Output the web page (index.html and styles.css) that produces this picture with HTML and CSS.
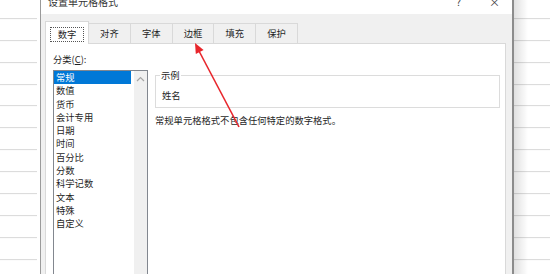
FILE: index.html
```html
<!doctype html>
<html>
<head>
<meta charset="utf-8">
<title>设置单元格格式</title>
<link rel="stylesheet" href="styles.css">
</head>
<body>

<div class="screen">
    <div class="sheet sheet-left"></div>

    <div class="dialog">
        <div class="title">
            <span class="title-text">设置单元格格式</span>
            <span class="title-btn">?</span>
            <span class="title-btn close">×</span>
        </div>

        <div class="body">
            <ul class="tabs">
                <li class="tab on"><span>数字</span></li>
                <li class="tab">对齐</li>
                <li class="tab">字体</li>
                <li class="tab">边框</li>
                <li class="tab">填充</li>
                <li class="tab">保护</li>
            </ul>

            <div class="panel">
                <div class="col-left">
                    <div class="label">分类(<u>C</u>):</div>
                    <div class="listbox">
                        <ul class="items">
                            <li class="on">常规</li>
                            <li>数值</li>
                            <li>货币</li>
                            <li>会计专用</li>
                            <li>日期</li>
                            <li>时间</li>
                            <li>百分比</li>
                            <li>分数</li>
                            <li>科学记数</li>
                            <li>文本</li>
                            <li>特殊</li>
                            <li>自定义</li>
                        </ul>
                        <div class="scroll">
                            <svg width="9" height="6" viewBox="0 0 9 6"><path d="M1 5 L4.5 1.5 L8 5" fill="none" stroke="#a6a6a6" stroke-width="1.2"/></svg>
                        </div>
                    </div>
                </div>

                <div class="col-right">
                    <fieldset class="sample">
                        <legend>示例</legend>
                        <div class="sample-val">姓名</div>
                    </fieldset>
                    <p class="desc">常规单元格格式不包含任何特定的数字格式。</p>
                </div>
            </div>
        </div>
    </div>

    <div class="sheet sheet-right"></div>

    <!-- 红色箭头 -->
    <svg class="arrow" width="550" height="274" viewBox="0 0 550 274">
        <line x1="239" y1="127" x2="199" y2="51" stroke="#e8262c" stroke-width="1.6"/>
        <polygon points="195,43 203.6,50 195.8,54" fill="#e8262c"/>
    </svg>
</div>

</body>
</html>
```

FILE: styles.css
```css
*{ margin: 0; padding: 0; box-sizing: border-box; }
li{ list-style: none; }
body{ background: #fff; font-family: "Noto Sans CJK SC", "Liberation Sans", sans-serif; font-size: 9.3px; color: #1f1f1f; overflow: hidden; }

.screen{ width: 550px; height: 274px; display: flex; position: relative; overflow: hidden; }

/* 表格背景 */
.sheet{ height: 274px; background: repeating-linear-gradient(to bottom, transparent 0, transparent 20.9px, #d8d8d8 20.9px, #d8d8d8 21.9px); background-position: 0 -2.9px; }
.sheet-left{ width: 37px; margin-right: 3px; }
.sheet-right{ flex: 1; background: linear-gradient(to right, rgba(0,0,0,.12), rgba(0,0,0,0) 14px), repeating-linear-gradient(to bottom, transparent 0, transparent 20.9px, #d8d8d8 20.9px, #d8d8d8 21.9px); background-position: 0 0, 0 -2.9px; }

/* 对话框 */
.dialog{ width: 474px; height: 274px; border-left: 1px solid #9a9a9a; border-right: 2px solid #8c8c8c; background: #f0f0f0; display: flex; flex-direction: column; overflow: hidden; }
.title{ height: 14px; flex-shrink: 0; background: #fff; display: flex; align-items: flex-start; padding: 0 12px 0 7px; font-size: 10px; }
.title-text{ margin-top: -4px; line-height: 12px; color: #333; }
.title-btn{ margin-top: -4px; line-height: 12px; color: #444; }
.title-btn:nth-of-type(2){ margin-left: auto; }
.title-btn.close{ margin-left: 28px; font-size: 11px; }

.body{ flex: 1; min-height: 0; padding: 7px 6px 0 4px; display: flex; flex-direction: column; }

/* 选项卡 */
.tabs{ display: flex; align-items: flex-end; height: 22px; flex-shrink: 0; }
.tab{ width: 41.8px; height: 20px; line-height: 19px; text-align: center; border: 1px solid #d9d9d9; border-bottom: none; border-left: none; background: #f0f0f0; }
.tab.on{ width: 44px; height: 23px; margin-bottom: -1px; border-left: 1px solid #d9d9d9; background: #fff; position: relative; z-index: 1; padding-top: 3px; }
.tab.on span{ display: inline-block; width: 34px; height: 15px; line-height: 13px; border: 1px dotted #555; }

.panel{ flex: 1 0 auto; background: #fff; border: 1px solid #d9d9d9; display: flex; padding: 9px 5px 0 7px; }

/* 左侧分类 */
.col-left{ width: 95px; }
.label{ line-height: 13px; margin-bottom: 4px; }
.listbox{ height: 210px; border: 1px solid #82878f; display: flex; }
.items{ flex: 1; padding-left: 0; }
.items li{ height: 13.3px; line-height: 13.3px; padding-left: 2px; margin-right: 3px; }
.items li.on{ background: #0078d7; color: #fff; }
.scroll{ width: 13px; background: #f0f0f0; display: flex; justify-content: center; padding-top: 5px; }
.scroll svg{ display: block; }

/* 右侧示例 */
.col-right{ flex: 1; margin-left: 7px; padding-top: 15.5px; }
.sample{ border: 1px solid #dcdcdc; padding: 0 0 0 4px; }
.sample legend{ padding: 0 1px; line-height: 13px; }
.sample-val{ line-height: 13px; padding: 7px 0 5px 2px; }
.desc{ line-height: 13px; margin-top: 6px; }

/* 箭头 */
.arrow{ position: absolute; left: 0; top: 0; pointer-events: none; z-index: 5; }
```
